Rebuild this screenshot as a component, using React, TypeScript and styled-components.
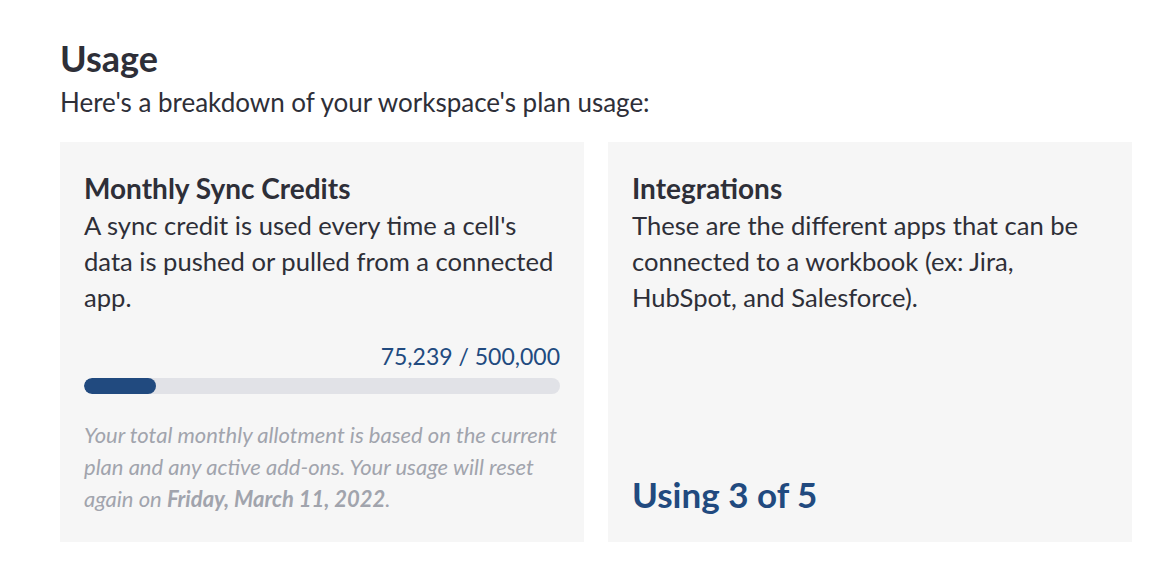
import React from "react";
import styled, { createGlobalStyle } from "styled-components";

const GlobalStyle = createGlobalStyle`
  html, body {
    margin: 0;
    padding: 0;
    background: #ffffff;
  }
  body {
    font-family: Lato, "Open Sans", sans-serif;
    color: #2e2f38;
  }
`;

const Page = styled.div`
  padding: 36px 22px 0 60px;
`;

const Heading = styled.h1`
  margin: 0;
  font-size: 36px;
  line-height: 44px;
  font-weight: 700;
  color: #2e2f38;
`;

const Intro = styled.p`
  margin: 4px 0 0;
  font-size: 26px;
  line-height: 36px;
`;

const CardGrid = styled.div`
  display: grid;
  grid-template-columns: 1fr 1fr;
  gap: 24px;
  margin-top: 22px;
`;

const Card = styled.section`
  display: flex;
  flex-direction: column;
  height: 400px;
  box-sizing: border-box;
  padding: 27px 24px 26px;
  background: #f6f6f6;
`;

const CardTitle = styled.h2`
  margin: 0;
  font-size: 28px;
  line-height: 38px;
  font-weight: 700;
`;

const CardText = styled.p`
  margin: 0;
  font-size: 25.6px;
  line-height: 36px;
`;

const Spacer = styled.div`
  flex: 1;
`;

const Count = styled.div`
  text-align: right;
  font-size: 23px;
  line-height: 28px;
  color: #214a7f;
`;

const Track = styled.div`
  margin-top: 8px;
  height: 16px;
  border-radius: 8px;
  background: #e1e2e7;
  overflow: hidden;
`;

const Fill = styled.div`
  height: 100%;
  border-radius: 8px;
  background: #214a7f;
`;

const Note = styled.p`
  margin: 25px 0 1px;
  font-size: 22px;
  line-height: 32px;
  font-style: italic;
  color: #a1a4ad;
`;

const NoteDate = styled.strong`
  font-weight: 700;
`;

const Big = styled.div`
  font-size: 35px;
  line-height: 44px;
  font-weight: 700;
  color: #214a7f;
`;

export default function App() {
  const used = 75239;
  const total = 500000;
  const pct = (used / total) * 100;

  return (
    <>
      <GlobalStyle />
      <Page>
        <Heading>Usage</Heading>
        <Intro>Here's a breakdown of your workspace's plan usage:</Intro>
        <CardGrid>
          <Card>
            <CardTitle>Monthly Sync Credits</CardTitle>
            <CardText>
              A sync credit is used every time a cell's data is pushed or pulled
              from a connected app.
            </CardText>
            <Spacer />
            <Count>
              {used.toLocaleString("en-US")} / {total.toLocaleString("en-US")}
            </Count>
            <Track>
              <Fill style={{ width: `${pct}%` }} />
            </Track>
            <Note>
              {"Your total monthly allotment is based on the current plan and any active add-ons. Your usage will reset again on "}
              <NoteDate>Friday, March 11, 2022</NoteDate>.
            </Note>
          </Card>
          <Card>
            <CardTitle>Integrations</CardTitle>
            <CardText>
              These are the different apps that can be connected to a workbook
              (ex: Jira, HubSpot, and Salesforce).
            </CardText>
            <Spacer />
            <Big>Using 3 of 5</Big>
          </Card>
        </CardGrid>
      </Page>
    </>
  );
}
